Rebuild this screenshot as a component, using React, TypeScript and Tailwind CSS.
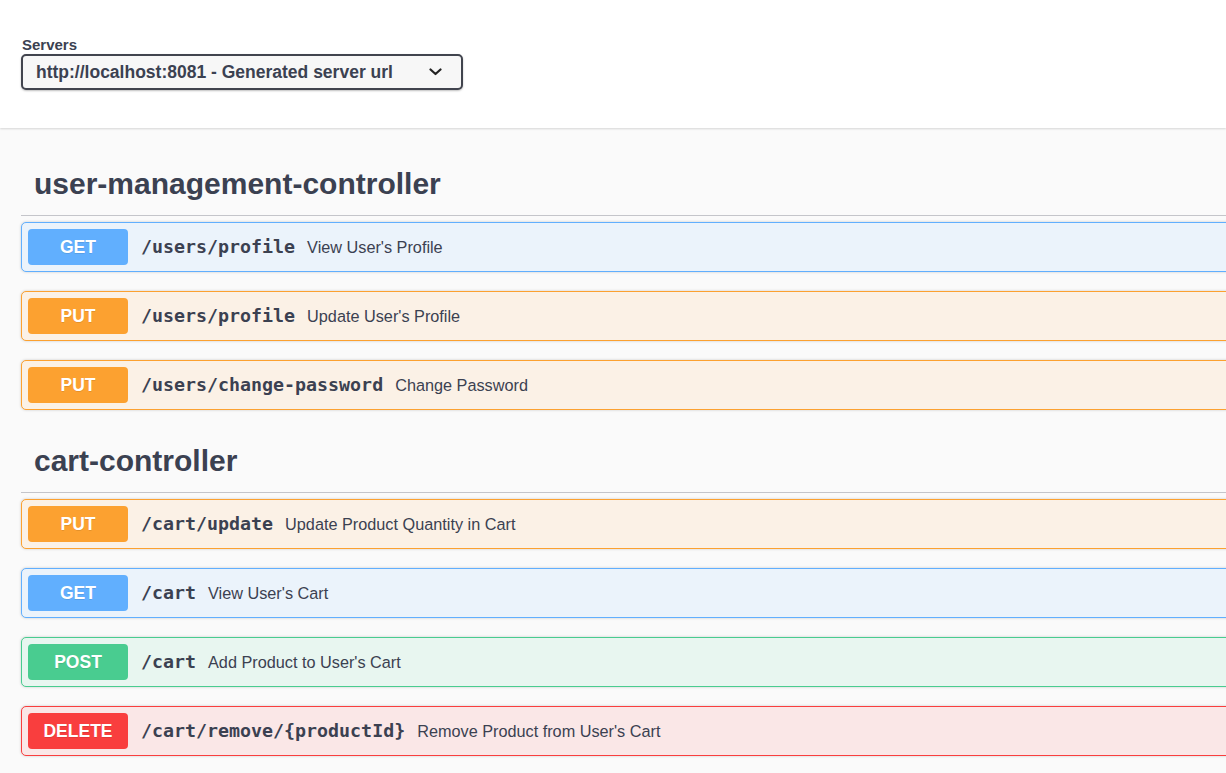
type Method = 'GET' | 'PUT' | 'POST' | 'DELETE';

const styles: Record<Method, { row: string; badge: string }> = {
  GET: { row: 'border-[#61affe] bg-[#ebf3fb]', badge: 'bg-[#61affe]' },
  PUT: { row: 'border-[#fca130] bg-[#fbf1e6]', badge: 'bg-[#fca130]' },
  POST: { row: 'border-[#49cc90] bg-[#e8f6f0]', badge: 'bg-[#49cc90]' },
  DELETE: { row: 'border-[#f93e3e] bg-[#fae7e7]', badge: 'bg-[#f93e3e]' },
};

const sections: { name: string; ops: { method: Method; path: string; summary: string }[] }[] = [
  {
    name: 'user-management-controller',
    ops: [
      { method: 'GET', path: '/users/profile', summary: "View User's Profile" },
      { method: 'PUT', path: '/users/profile', summary: "Update User's Profile" },
      { method: 'PUT', path: '/users/change-password', summary: 'Change Password' },
    ],
  },
  {
    name: 'cart-controller',
    ops: [
      { method: 'PUT', path: '/cart/update', summary: 'Update Product Quantity in Cart' },
      { method: 'GET', path: '/cart', summary: "View User's Cart" },
      { method: 'POST', path: '/cart', summary: "Add Product to User's Cart" },
      { method: 'DELETE', path: '/cart/remove/{productId}', summary: "Remove Product from User's Cart" },
    ],
  },
];

function OpRow({ method, path, summary }: { method: Method; path: string; summary: string }) {
  const s = styles[method];
  return (
    <div
      className={`mb-[19px] flex h-[50px] items-center rounded-[5px] border px-[6px] shadow-[0_0_3px_rgba(0,0,0,0.19)] ${s.row}`}
    >
      <div
        className={`flex h-[36px] w-[100px] shrink-0 items-center justify-center rounded-[4px] text-[17.5px] font-bold text-white [text-shadow:0_1px_0_rgba(0,0,0,0.1)] ${s.badge}`}
      >
        {method}
      </div>
      <span className="ml-[13px] font-['DejaVu_Sans_Mono',monospace] text-[18.3px] font-bold text-[#3b4151]">
        {path}
      </span>
      <span className="ml-[12px] text-[16.25px] text-[#3b4151]">{summary}</span>
    </div>
  );
}

export default function App() {
  return (
    <div className="min-h-screen w-full overflow-hidden bg-[#fafafa] font-['Liberation_Sans',Arial,sans-serif] text-[#3b4151]">
      {/* servers bar */}
      <div className="h-[128px] w-full bg-white pl-[21px] pt-[35px] shadow-[0_1px_2px_0_rgba(0,0,0,0.15)]">
        <div className="h-[19px] pl-[1px] text-[15px] font-bold leading-[19px]">Servers</div>
        <div className="flex h-[36px] w-[442px] items-center justify-between rounded-[5px] border-2 border-[#41444e] bg-[#f7f7f7] pl-[13px] pr-[19px] shadow-[0_1px_2px_0_rgba(0,0,0,0.25)]">
          <span className="text-[17.5px] font-bold">http://localhost:8081 - Generated server url</span>
          <svg width="13" height="8" viewBox="0 0 13 8" fill="none">
            <path d="M1.5 1.5L6.5 6L11.5 1.5" stroke="#222" strokeWidth="2.2" strokeLinecap="round" strokeLinejoin="round" />
          </svg>
        </div>
      </div>

      {/* operations */}
      <div className="w-[1320px] pl-[21px] pt-[24px]">
        {sections.map((sec) => (
          <div key={sec.name}>
            <div className="mb-[6px] flex h-[64px] items-center border-b border-[#c4c5ca] pl-[13px]">
              <h3 className="text-[30px] font-bold leading-none">{sec.name}</h3>
            </div>
            {sec.ops.map((op) => (
              <OpRow key={op.method + op.path} {...op} />
            ))}
          </div>
        ))}
      </div>
    </div>
  );
}
